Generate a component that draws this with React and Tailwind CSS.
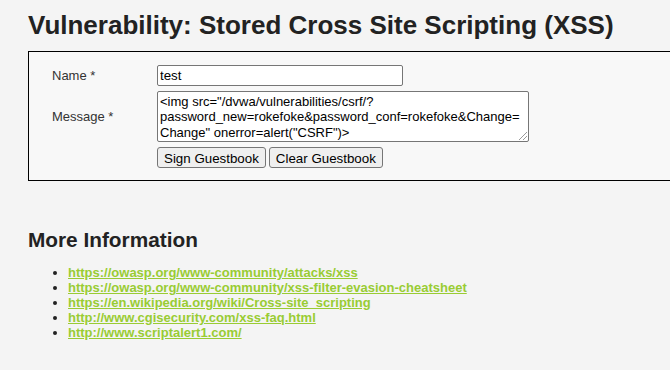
import React from "react";

export default function App() {
  const msg =
    '<img src="/dvwa/vulnerabilities/csrf/?\npassword_new=rokefoke&password_conf=rokefoke&Change=\nChange" onerror=alert("CSRF")>';
  const links = [
    "https://owasp.org/www-community/attacks/xss",
    "https://owasp.org/www-community/xss-filter-evasion-cheatsheet",
    "https://en.wikipedia.org/wiki/Cross-site_scripting",
    "http://www.cgisecurity.com/xss-faq.html",
    "http://www.scriptalert1.com/",
  ];
  return (
    <div className="h-[370px] w-full overflow-hidden bg-[#f4f4f4] pl-[28px] pt-[10px] font-['Liberation_Sans',Arial,sans-serif] text-[13px] text-[#222]">
      <h1 className="text-[26px] font-bold leading-[30px] whitespace-nowrap">
        Vulnerability: Stored Cross Site Scripting (XSS)
      </h1>
      <div className="mt-[11px] w-[720px] border border-black bg-[#f8f8f8] pl-[23px] pt-[13px] pb-[12px]">
        <div className="grid grid-cols-[105px_auto] gap-y-[5px] items-center">
          <div className="text-[#333]">Name *</div>
          <div>
            <input
              type="text"
              defaultValue="test"
              className="block h-[21px] w-[246px] rounded-[2px] border border-[#767676] bg-white px-[2px] text-[13.33px] text-black"
            />
          </div>
          <div className="text-[#333]">Message *</div>
          <div className="relative w-[372px]">
            <textarea
              defaultValue={msg}
              wrap="off"
              className="block h-[51px] w-[372px] resize-none overflow-hidden whitespace-pre rounded-[2px] border border-[#767676] bg-white px-[2px] py-[2px] text-[13px] leading-[15.33px] text-black"
            />
            <svg
              className="pointer-events-none absolute bottom-[2px] right-[2px]"
              width="9"
              height="9"
              viewBox="0 0 9 9"
            >
              <line x1="1" y1="9" x2="9" y2="1" stroke="#9a9a9a" strokeWidth="1" />
              <line x1="5" y1="9" x2="9" y2="5" stroke="#9a9a9a" strokeWidth="1" />
            </svg>
          </div>
          <div></div>
          <div className="flex gap-[3px]">
            <button className="h-[21px] rounded-[3px] border border-[#767676] bg-[#efefef] px-[6px] py-[1px] text-[13.33px] text-black">
              Sign Guestbook
            </button>
            <button className="h-[21px] rounded-[3px] border border-[#767676] bg-[#efefef] px-[6px] py-[1px] text-[13.33px] text-black">
              Clear Guestbook
            </button>
          </div>
        </div>
      </div>
      <h2 className="mt-[47px] text-[20.8px] font-bold leading-[24px]">More Information</h2>
      <ul className="mt-[13px] list-disc pl-[40px] leading-[15px]">
        {links.map((l) => (
          <li key={l}>
            <a href="#" className="font-bold text-[#99cc33] underline">
              {l}
            </a>
          </li>
        ))}
      </ul>
    </div>
  );
}
